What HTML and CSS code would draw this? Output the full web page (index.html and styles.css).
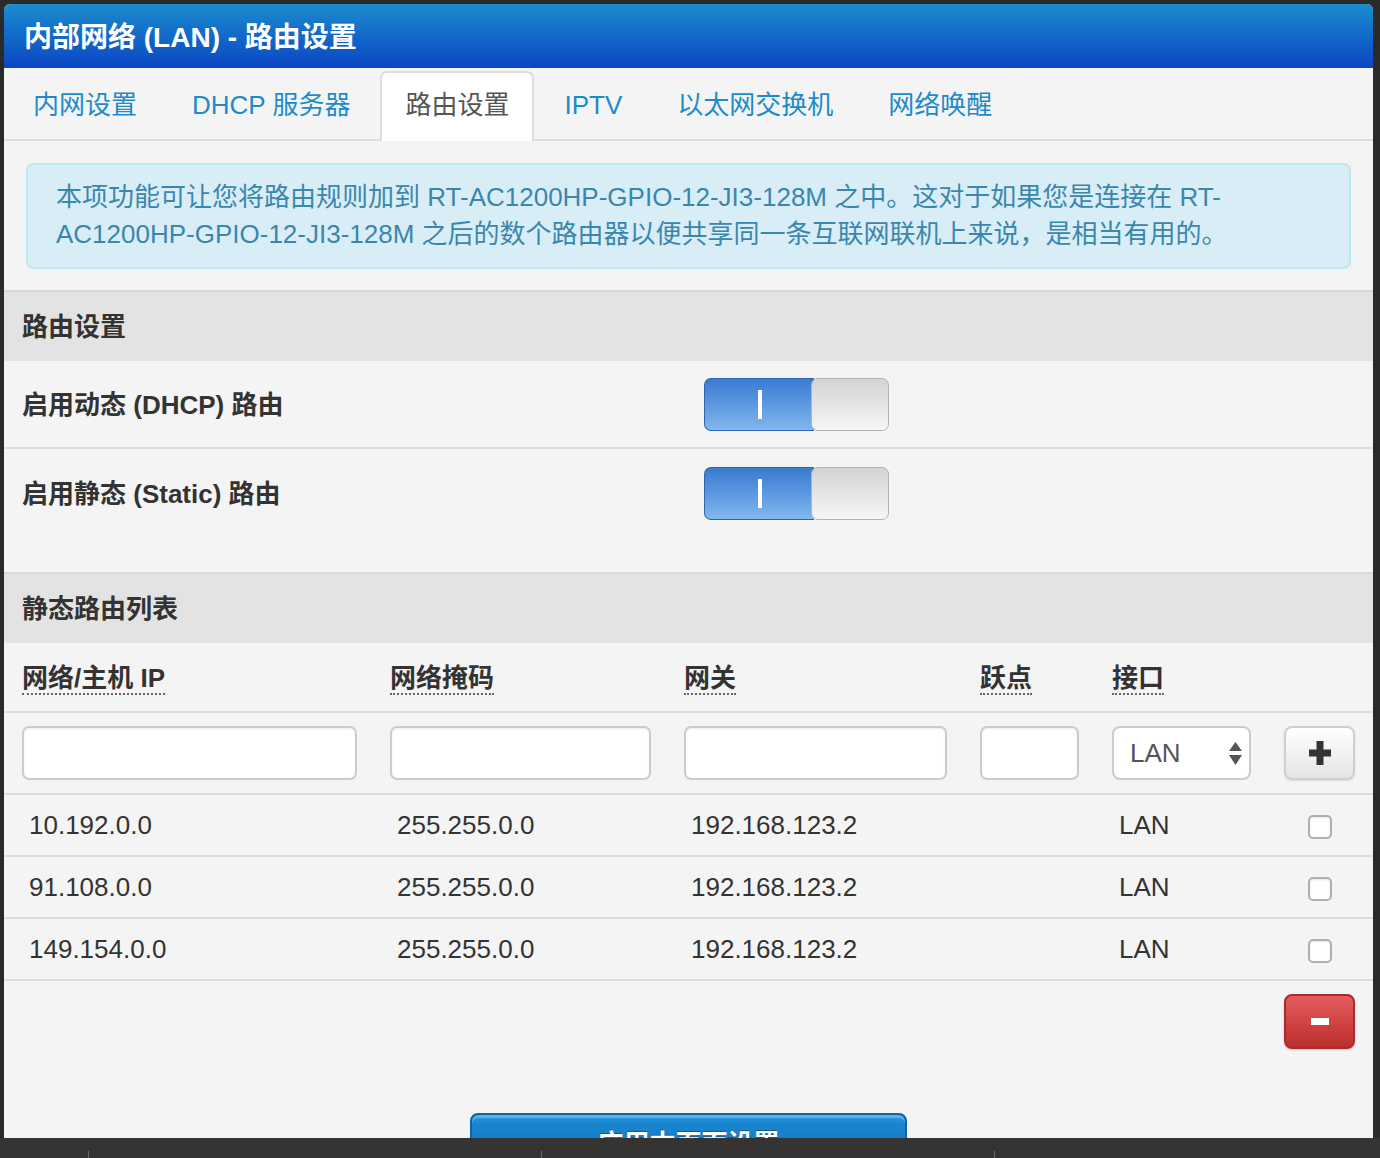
FILE: index.html
```html
<!DOCTYPE html>
<html lang="zh-CN">
<head>
<meta charset="utf-8">
<title>内部网络 (LAN) - 路由设置</title>
<link rel="stylesheet" href="styles.css">
</head>
<body>
<div class="frame">
  <div class="panel">
    <div class="head">内部网络 (LAN) - 路由设置</div>
    <div class="tabs">
      <div class="tab">内网设置</div>
      <div class="tab">DHCP 服务器</div>
      <div class="tab active">路由设置</div>
      <div class="tab">IPTV</div>
      <div class="tab">以太网交换机</div>
      <div class="tab">网络唤醒</div>
    </div>
    <div class="alert">本项功能可让您将路由规则加到 RT-AC1200HP-GPIO-12-JI3-128M 之中。这对于如果您是连接在 RT-AC1200HP-GPIO-12-JI3-128M 之后的数个路由器以便共享同一条互联网联机上来说，是相当有用的。</div>

    <div class="sec">路由设置</div>
    <div class="opt">
      <div class="opt-label">启用动态 (DHCP) 路由</div>
      <div class="switch"><div class="sw-on"><span class="sw-bar"></span></div><div class="sw-knob"></div></div>
    </div>
    <div class="opt last">
      <div class="opt-label">启用静态 (Static) 路由</div>
      <div class="switch"><div class="sw-on"><span class="sw-bar"></span></div><div class="sw-knob"></div></div>
    </div>

    <div class="sec">静态路由列表</div>
    <div class="trow th">
      <div><span class="abbr">网络/主机 IP</span></div>
      <div><span class="abbr">网络掩码</span></div>
      <div><span class="abbr">网关</span></div>
      <div><span class="abbr">跃点</span></div>
      <div><span class="abbr">接口</span></div>
      <div></div>
    </div>
    <div class="trow inrow">
      <input class="inp" type="text">
      <input class="inp" type="text">
      <input class="inp" type="text">
      <input class="inp" type="text">
      <div class="sel"><span>LAN</span>
        <svg class="sel-arrows" width="13" height="23" viewBox="0 0 13 23"><path d="M6.5 0 L13 9 L0 9 Z" fill="#555"/><path d="M0 13 L13 13 L6.5 23 Z" fill="#555"/></svg>
      </div>
      <div class="btn-add"><svg width="22" height="24" viewBox="0 0 22 24"><rect x="7.5" y="0" width="7" height="24" fill="#333"/><rect x="0" y="8.5" width="22" height="7" fill="#333"/></svg></div>
    </div>
    <div class="trow drow">
      <div class="cell">10.192.0.0</div><div class="cell">255.255.0.0</div><div class="cell">192.168.123.2</div><div class="cell"></div><div class="cell">LAN</div><div class="chk-cell"><span class="chk"></span></div>
    </div>
    <div class="trow drow">
      <div class="cell">91.108.0.0</div><div class="cell">255.255.0.0</div><div class="cell">192.168.123.2</div><div class="cell"></div><div class="cell">LAN</div><div class="chk-cell"><span class="chk"></span></div>
    </div>
    <div class="trow drow">
      <div class="cell">149.154.0.0</div><div class="cell">255.255.0.0</div><div class="cell">192.168.123.2</div><div class="cell"></div><div class="cell">LAN</div><div class="chk-cell"><span class="chk"></span></div>
    </div>
    <div class="actions">
      <div class="btn-del"><span class="minus"></span></div>
    </div>
    <div class="apply">应用本页面设置</div>
  </div>
</div>
<div class="dock"><span class="mark"></span><span class="mark"></span><span class="mark"></span></div>
</body>
</html>
```

FILE: styles.css
```css
* { box-sizing: border-box; }
html, body {
  margin: 0;
  height: 1158px;
  overflow: hidden;
  background: #2a2a2a;
  font-family: "Liberation Sans", "Noto Sans CJK SC", sans-serif;
}
.frame { padding: 4px 7px 0 4px; }
.panel {
  height: 1134px;
  background: #f4f4f4;
  border-radius: 6px 6px 0 0;
  overflow: hidden;
}
.head {
  height: 64px;
  background: linear-gradient(#1a8ccd, #0b46c4);
  color: #fff;
  font-size: 28px;
  font-weight: bold;
  display: flex;
  align-items: center;
  padding-left: 20px;
  padding-bottom: 2px;
}
.tabs {
  display: flex;
  gap: 5px;
  height: 73px;
  padding: 3px 0 0 4px;
  border-bottom: 2px solid #ddd;
}
.tab {
  height: 70px;
  margin-bottom: -2px;
  padding: 0 23px;
  border: 2px solid transparent;
  border-bottom: none;
  border-radius: 7px 7px 0 0;
  font-size: 26px;
  line-height: 64px;
  color: #1d8bcb;
  white-space: nowrap;
}
.tab.active {
  background: #fff;
  border-color: #ddd;
  color: #555;
}
.alert {
  margin: 22px 22px 21px;
  border: 2px solid #bce8f1;
  border-radius: 7px;
  background: #d9edf7;
  color: #3a87ad;
  padding: 14px 28px;
  font-size: 26px;
  line-height: 37px;
}
.sec {
  height: 71px;
  border-top: 2px solid #d9d9d9;
  background: #e3e3e3;
  padding-left: 18px;
  padding-bottom: 4px;
  display: flex;
  align-items: center;
  font-size: 26px;
  font-weight: bold;
  color: #333;
}
.opt {
  height: 88px;
  display: flex;
  align-items: center;
  padding-left: 18px;
  border-bottom: 2px solid #ddd;
}
.opt.last {
  border-bottom: none;
  margin-bottom: 35px;
}
.opt-label {
  width: 682px;
  font-size: 26px;
  font-weight: bold;
  color: #333;
  padding-bottom: 4px;
}
.switch {
  display: flex;
  width: 185px;
  height: 53px;
}
.sw-on {
  width: 110px;
  border: 1px solid #2f64ae;
  border-right: none;
  border-radius: 7px 0 0 7px;
  background: linear-gradient(#3a7bd1, #5c98e0 50%, #83b8ee);
  display: flex;
  align-items: center;
  justify-content: center;
}
.sw-bar {
  width: 4px;
  height: 29px;
  background: #fff;
}
.sw-knob {
  width: 78px;
  margin-left: -3px;
  border: 1px solid #b3b3b3;
  border-radius: 7px;
  background: linear-gradient(#d3d3d3, #e6e6e6 55%, #f7f7f7);
}
.trow {
  display: grid;
  grid-template-columns: 335px 261px 263px 99px 139px 71px;
  column-gap: 33px;
  padding: 0 18px;
  align-items: center;
  border-bottom: 2px solid #ddd;
}
.th { height: 70px; padding-top: 5px; }
.abbr {
  display: inline-block;
  font-size: 26px;
  line-height: 28px;
  font-weight: bold;
  color: #333;
  border-bottom: 2px dotted #666;
  padding-bottom: 1px;
}
.inrow { height: 82px; }
.inp {
  display: block;
  width: 100%;
  height: 54px;
  margin: 0;
  border: 2px solid #ccc;
  border-radius: 7px;
  background: #fff;
  box-shadow: inset 0 1px 2px rgba(0,0,0,0.08);
}
.sel {
  height: 54px;
  border: 2px solid #ccc;
  border-radius: 8px;
  background: #fff;
  display: flex;
  align-items: center;
  justify-content: space-between;
  padding: 0 7px 0 16px;
  font-size: 26px;
  color: #555;
}
.btn-add {
  height: 54px;
  border: 2px solid #cfcfcf;
  border-radius: 8px;
  background: linear-gradient(#fff, #e4e4e4);
  box-shadow: 0 1px 2px rgba(0,0,0,0.12);
  display: flex;
  align-items: center;
  justify-content: center;
}
.drow { height: 62px; }
.cell {
  padding-left: 7px;
  font-size: 26px;
  color: #333;
}
.chk-cell {
  display: flex;
  justify-content: center;
  padding-top: 4px;
}
.chk {
  width: 24px;
  height: 24px;
  border: 2px solid #b0b0b0;
  border-radius: 5px;
  background: #fff;
  box-shadow: inset 0 1px 2px rgba(0,0,0,0.1);
}
.actions {
  display: flex;
  justify-content: flex-end;
  padding: 13px 18px 0;
}
.btn-del {
  width: 71px;
  height: 55px;
  border: 2px solid #ad2a2a;
  border-radius: 8px;
  background: linear-gradient(#e45d5d, #d24444 50%, #bb2f2f);
  box-shadow: 0 1px 2px rgba(0,0,0,0.2);
  display: flex;
  align-items: center;
  justify-content: center;
}
.minus {
  width: 18px;
  height: 7px;
  background: #fff;
}
.apply {
  width: 437px;
  height: 60px;
  margin: 64px auto 0;
  border: 2px solid #0c62ab;
  border-radius: 8px;
  background: linear-gradient(#2c98da, #1a86cf 15%, #0f6fc2);
  box-shadow: inset 0 3px 0 rgba(255,255,255,0.25);
  color: #fff;
  font-size: 26px;
  font-weight: bold;
  text-align: center;
  padding-top: 8px;
  text-shadow: 0 -1px 0 rgba(0,0,0,0.3);
}
.dock {
  height: 20px;
  background: #353433;
  display: flex;
  align-items: flex-end;
  padding-left: 88px;
}
.mark {
  flex: 0 0 453px;
  height: 7px;
  border-left: 1px solid #6a6a6a;
}
```
